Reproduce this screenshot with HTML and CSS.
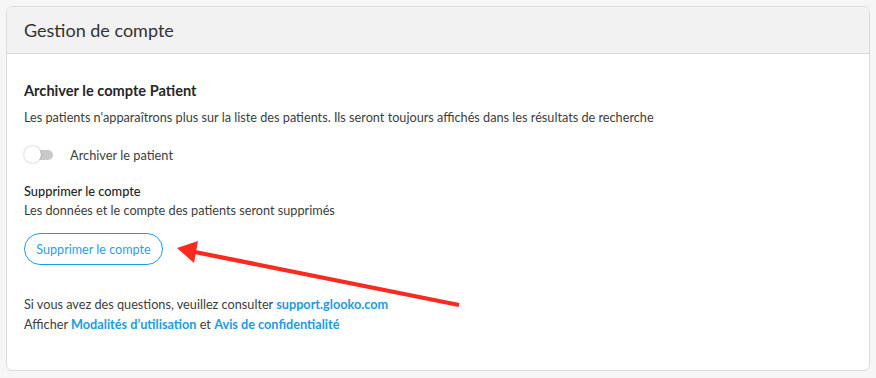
FILE: index.html
```html
<!DOCTYPE html>
<html lang="fr">
<head>
<meta charset="utf-8">
<link rel="stylesheet" href="styles.css">
</head>
<body>
<div class="page">
  <section class="card">
    <header class="card-header">Gestion de compte</header>
    <div class="card-body">
      <h2 class="section-title">Archiver le compte Patient</h2>
      <p class="desc">Les patients n'apparaîtrons plus sur la liste des patients. Ils seront toujours affichés dans les résultats de recherche</p>
      <label class="toggle-row">
        <span class="toggle"><span class="track"></span><span class="thumb"></span></span>
        <span class="toggle-label">Archiver le patient</span>
      </label>
      <h3 class="sub-title">Supprimer le compte</h3>
      <p class="desc tight">Les données et le compte des patients seront supprimés</p>
      <button class="btn-outline">Supprimer le compte</button>
      <div class="footer-text">
        <p>Si vous avez des questions, veuillez consulter <a href="#">support.glooko.com</a></p>
        <p>Afficher <a href="#">Modalités d’utilisation</a> et <a href="#">Avis de confidentialité</a></p>
      </div>
    </div>
  </section>
  <svg class="arrow" width="876" height="378" viewBox="0 0 876 378">
    <line x1="190" y1="251" x2="459" y2="305" stroke="#fa2a1e" stroke-width="4.2" stroke-linecap="butt"/>
    <polygon points="177,248 198,241 194,263" fill="#fa2a1e"/>
  </svg>
</div>
</body>
</html>
```
FILE: styles.css
```css
* { box-sizing: border-box; }
html, body { margin: 0; padding: 0; }
body {
  background: #f6f6f6;
  font-family: Lato, "Open Sans", sans-serif;
  color: #3a3a3a;
  width: 876px;
  height: 378px;
  overflow: hidden;
}
.page {
  position: relative;
  width: 876px;
  height: 378px;
  padding: 6px 6px 7px 6px;
}
.card {
  background: #fff;
  border: 1px solid #dcdcdc;
  border-radius: 6px;
  height: 365px;
  overflow: hidden;
}
.card-header {
  background: #f2f2f2;
  border-bottom: 1px solid #d8d8d8;
  height: 47px;
  display: flex;
  align-items: center;
  padding-left: 17px;
  padding-bottom: 1px;
  font-size: 18px;
  color: #333;
}
.card-body {
  padding: 27px 17px 0 17px;
  display: flex;
  flex-direction: column;
  align-items: flex-start;
}
.section-title {
  margin: 0;
  font-size: 14.6px;
  line-height: 20px;
  font-weight: 700;
  color: #262626;
}
.desc {
  margin: 7px 0 0 0;
  font-size: 12.7px;
  line-height: 18px;
  color: #3d3d3d;
}
.desc.tight { margin-top: 1px; }
.toggle-row {
  display: flex;
  align-items: center;
  margin-top: 19px;
  height: 20px;
}
.toggle {
  position: relative;
  width: 30px;
  height: 18px;
  display: block;
}
.track {
  position: absolute;
  left: 6px;
  top: 4px;
  width: 23px;
  height: 10px;
  border-radius: 5px;
  background: #c9c9c9;
}
.thumb {
  position: absolute;
  left: 0;
  top: 0;
  width: 17px;
  height: 17px;
  border-radius: 50%;
  background: #fff;
  box-shadow: 0 0 2px rgba(0,0,0,0.35);
}
.toggle-label {
  margin-left: 16px;
  font-size: 12.8px;
  color: #3d3d3d;
}
.sub-title {
  margin: 17px 0 0 0;
  font-size: 12.8px;
  line-height: 18px;
  font-weight: 500;
  color: #262626;
}
.btn-outline {
  margin-top: 14px;
  height: 32px;
  width: 139px;
  border: 1px solid #1e9de6;
  border-radius: 16px;
  background: #fff;
  color: #2a9fe4;
  font-family: inherit;
  font-size: 12.6px;
  padding: 0;
  cursor: pointer;
}
.footer-text {
  margin-top: 29px;
}
.footer-text p {
  margin: 0;
  font-size: 12.7px;
  line-height: 20px;
  color: #3d3d3d;
}
.footer-text a {
  color: #1a9be3;
  font-weight: 700;
  text-decoration: none;
}
.arrow {
  position: absolute;
  left: 0;
  top: 0;
  pointer-events: none;
}
```
